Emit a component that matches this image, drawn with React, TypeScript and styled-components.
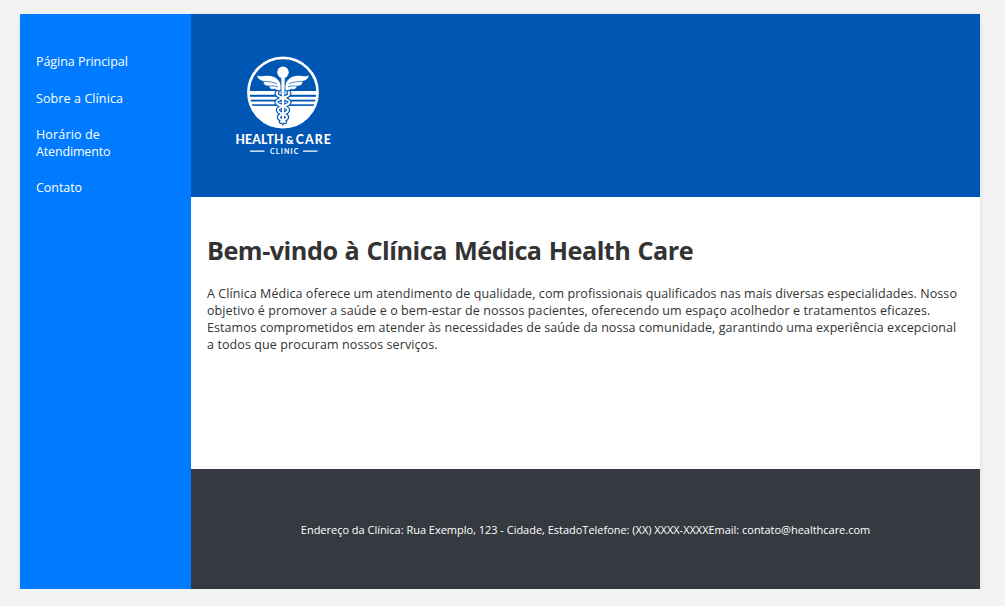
import React from "react";
import styled, { createGlobalStyle } from "styled-components";

const GlobalStyle = createGlobalStyle`
  * { box-sizing: border-box; }
  body {
    margin: 0;
    background: #f3f3f3;
    color: #333333;
    font-family: "Open Sans", "Noto Sans", sans-serif;
    font-size: 12.5px;
    line-height: 17px;
  }
`;

const Page = styled.div`
  display: grid;
  grid-template-columns: 171px 1fr;
  width: 960px;
  height: 575px;
  margin: 14px 0 0 20px;
  background: #ffffff;
  box-shadow: 0 2px 5px rgba(0, 0, 0, 0.1);
`;

const Sidebar = styled.nav`
  background: #007bff;
  padding: 39.2px 16px;
`;

const NavList = styled.ul`
  list-style: none;
  margin: 0;
  padding: 0;
  display: flex;
  flex-direction: column;
  gap: 19.4px;
`;

const NavLink = styled.a`
  display: block;
  color: #ffffff;
  text-decoration: none;
`;

const Column = styled.div`
  display: grid;
  grid-template-rows: 183px 272px 120px;
`;

const Header = styled.header`
  background: #0056b3;
  padding: 36px 0 0 38px;
`;

const Main = styled.main`
  padding: 35px 16px 0;
`;

const Line = styled.span<{ $spacing?: number }>`
  display: block;
  width: max-content;
  white-space: nowrap;
  letter-spacing: ${({ $spacing = 0 }) => $spacing}px;
`;

const Title = styled.h1`
  margin: 0 0 17px;
  font-size: 25.2px;
  line-height: 36px;
  font-weight: 700;
  word-spacing: 1px;
`;

const Paragraph = styled.p`
  margin: 0;
`;

const Footer = styled.footer`
  display: flex;
  align-items: center;
  justify-content: center;
  background: #343a40;
  color: #ffffff;
  font-size: 11px;
`;

function Logo() {
  return (
    <svg width="108" height="110" viewBox="0 0 108 110" role="img" aria-label="Health & Care Clinic">
      <clipPath id="disc"><circle cx="54" cy="42.5" r="35" /></clipPath>
      <g clipPath="url(#disc)" fill="#fff">
        <rect x="18" y="41" width="72" height="3.8" />
        <rect x="18" y="46.8" width="72" height="2.9" />
        <rect x="18" y="51.5" width="72" height="2.8" />
        <rect x="18" y="55.9" width="72" height="22" />
      </g>
      <circle cx="54" cy="42.5" r="34.6" fill="none" stroke="#fff" strokeWidth="2.6" />
      <g fill="#fff" stroke="#0056b3" strokeWidth="0.8" strokeLinejoin="round">
        <path d="M53 38C51.5 30 47 26 40 25.4C36 25 33 27 27.5 25C28.5 29 31 31 34.5 31.4C33.5 34 36.5 36.4 40 36C40 39 43 40.3 46 39C49 42.5 52 41 53 38Z" />
        <path d="M55 38C56.5 30 61 26 68 25.4C72 25 75 27 80.5 25C79.5 29 77 31 73.5 31.4C74.5 34 71.5 36.4 68 36C68 39 65 40.3 62 39C59 42.5 56 41 55 38Z" />
        <path d="M51.8 26H56.2L55.4 72L54 75.5L52.6 72Z" />
      </g>
      <path d="M35 31.3C40 32 44 31.5 48 34M73 31.3C68 32 64 31.5 60 34M40.5 36C44 36.2 46 35.5 49 37M67.5 36C64 36.2 62 35.5 59 37" fill="none" stroke="#0056b3" strokeWidth=".7" />
      <g fill="none" strokeLinecap="round">
        <g stroke="#0056b3" strokeWidth="4.4">
          <path d="M48.5 42C44 47 60 48 60.5 52C61 56 49 56 49 60C49 64 58 64 58 67C58 70 54 70 52 72" />
          <path d="M59.5 42C64 47 48 48 47.5 52C47 56 59 56 59 60C59 64 50 64 50 67C50 70 54 70 56 72" />
        </g>
        <g stroke="#fff" strokeWidth="2">
          <path d="M48.5 42C44 47 60 48 60.5 52C61 56 49 56 49 60C49 64 58 64 58 67C58 70 54 70 52 72" />
          <path d="M59.5 42C64 47 48 48 47.5 52C47 56 59 56 59 60C59 64 50 64 50 67C50 70 54 70 56 72" />
          <path d="M54 28V72" />
        </g>
      </g>
      <circle cx="54" cy="22.3" r="5.8" fill="#fff" />
      <g fill="#fff" fontFamily="Lato, sans-serif">
        <text x="6.5" y="93.7" fontSize="12.2" fontWeight="900" textLength="48" lengthAdjust="spacing">HEALTH</text>
        <text x="56.8" y="93.7" fontSize="11" fontWeight="900" textLength="8" lengthAdjust="spacingAndGlyphs">&amp;</text>
        <text x="66.8" y="93.7" fontSize="12.2" fontWeight="900" textLength="35" lengthAdjust="spacing">CARE</text>
        <text x="41" y="104" fontSize="7" fontWeight="700" textLength="28.5">CLINIC</text>
      </g>
      <path d="M21 101.2H35.5M74 101.2H88.5" stroke="#fff" strokeWidth="1.3" />
    </svg>
  );
}

export default function App() {
  return (
    <>
      <GlobalStyle />
      <Page>
        <Sidebar>
          <NavList>
            <li><NavLink href="#"><Line $spacing={-0.05}>Página Principal</Line></NavLink></li>
            <li><NavLink href="#"><Line $spacing={0.1}>Sobre a Clínica</Line></NavLink></li>
            <li><NavLink href="#"><Line $spacing={0.15}>Horário de</Line><Line $spacing={-0.15}>Atendimento</Line></NavLink></li>
            <li><NavLink href="#"><Line $spacing={-0.05}>Contato</Line></NavLink></li>
          </NavList>
        </Sidebar>
        <Column>
          <Header><Logo /></Header>
          <Main>
            <Title><Line $spacing={-0.47}>Bem-vindo à Clínica Médica Health Care</Line></Title>
            <Paragraph>
              <Line $spacing={0.075}>A Clínica Médica oferece um atendimento de qualidade, com profissionais qualificados nas mais diversas especialidades. Nosso </Line>
              <Line $spacing={0.1}>objetivo é promover a saúde e o bem-estar de nossos pacientes, oferecendo um espaço acolhedor e tratamentos eficazes. </Line>
              <Line $spacing={0.05}>Estamos comprometidos em atender às necessidades de saúde da nossa comunidade, garantindo uma experiência excepcional </Line>
              <Line $spacing={0.1}>a todos que procuram nossos serviços.</Line>
            </Paragraph>
          </Main>
          <Footer>
            <Line $spacing={-0.02}>Endereço da Clínica: Rua Exemplo, 123 - Cidade, EstadoTelefone: (XX) XXXX-XXXXEmail: contato@healthcare.com</Line>
          </Footer>
        </Column>
      </Page>
    </>
  );
}
